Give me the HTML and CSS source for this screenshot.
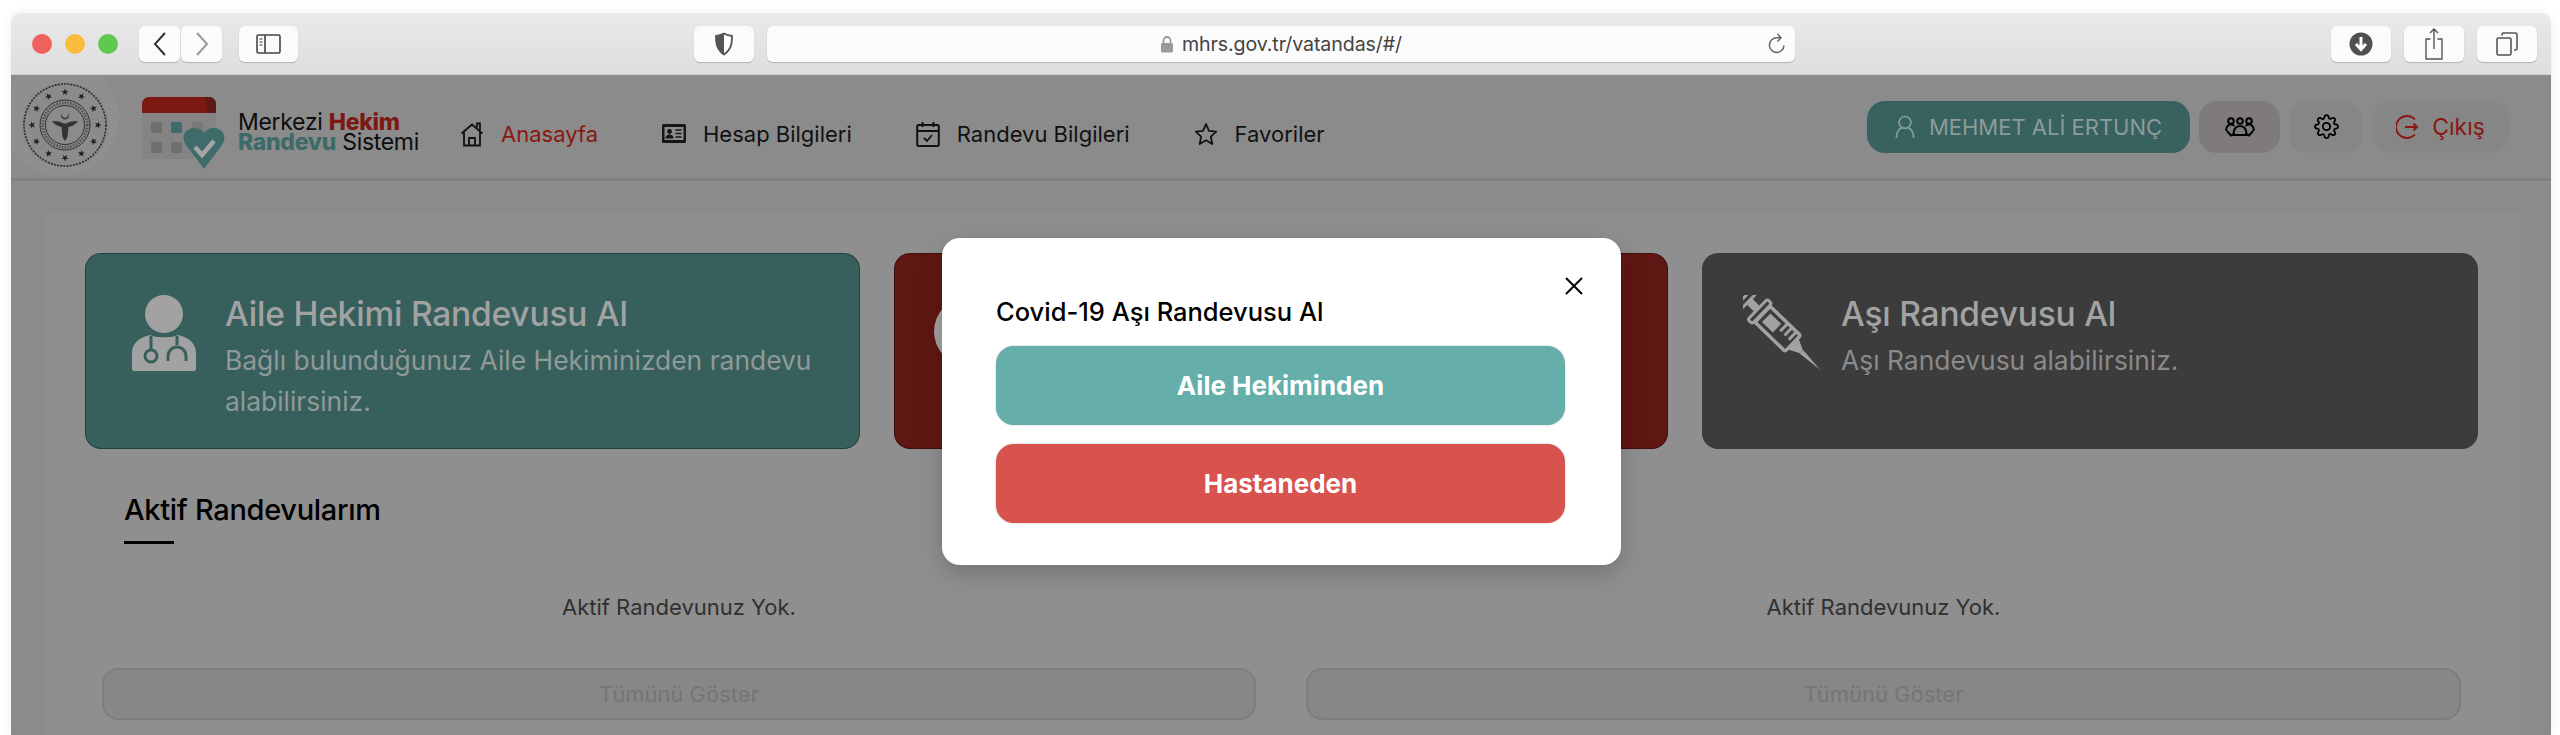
FILE: index.html
```html
<!DOCTYPE html>
<html lang="tr">
<head>
<meta charset="UTF-8">
<title>MHRS</title>
<link rel="stylesheet" href="styles.css">
</head>
<body>
<div class="window">

    <!-- browser toolbar -->
    <div class="toolbar">
        <div class="lights">
            <span class="light red"></span>
            <span class="light yellow"></span>
            <span class="light green"></span>
        </div>
        <div class="nav-pair">
            <div class="tool tool-nav">
                <svg width="14" height="26" viewBox="0 0 14 26"><path d="M12 2 2 13l10 11" fill="none" stroke="#333" stroke-width="2"/></svg>
            </div>
            <div class="tool tool-nav">
                <svg width="14" height="26" viewBox="0 0 14 26"><path d="M2 2l10 11L2 24" fill="none" stroke="#9a9a9a" stroke-width="2"/></svg>
            </div>
        </div>
        <div class="tool tool-side">
            <svg width="25" height="20" viewBox="0 0 25 20"><rect x="1" y="1" width="23" height="18" rx="1.5" fill="none" stroke="#444" stroke-width="1.6"/><path d="M9 1v18" stroke="#444" stroke-width="1.6"/><path d="M3.5 5h3M3.5 8h3M3.5 11h3" stroke="#777" stroke-width="1.4"/></svg>
        </div>
        <div class="tool tool-shield">
            <svg width="20" height="24" viewBox="0 0 20 24"><path d="M10 1.5c3 1.6 5.500 2.200 8 2.500 0 8-1 14-8 18.500C3 18 2 12 2 4c2.500-.3 5-.9 8-2.500z" fill="#fff" stroke="#555" stroke-width="1.8"/><path d="M10 1.500C7 3.100 4.500 3.700 2 4c0 8 1 14 8 18.500z" fill="#555"/></svg>
        </div>
        <div class="urlbar">
            <svg width="14" height="17" viewBox="0 0 14 17"><path d="M3.500 7V4.500a3.500 3.500 0 0 1 7 0V7" fill="none" stroke="#999" stroke-width="1.800"/><rect x="1" y="7" width="12" height="9.500" rx="1.500" fill="#999"/></svg>
            <span class="url-text">mhrs.gov.tr/vatandas/#/</span>
            <svg class="reload" width="20" height="22" viewBox="0 0 20 22"><path d="M17 12.500A7.300 7.300 0 1 1 10 4.800h3" fill="none" stroke="#666" stroke-width="1.500"/><path d="M10.500 1l3.500 3.800-3.500 3.800" fill="none" stroke="#666" stroke-width="1.500"/></svg>
        </div>
        <div class="tool tool-right tool-download">
            <svg width="24" height="24" viewBox="0 0 24 24"><circle cx="12" cy="12" r="11.500" fill="#505050"/><path d="M12 5v12M7 12l5 5.500 5-5.500" fill="none" stroke="#fff" stroke-width="3"/></svg>
        </div>
        <div class="tool tool-right">
            <svg width="20" height="34" viewBox="0 0 20 34"><path d="M6.500 12H2v20h16V12h-4.500" fill="none" stroke="#555" stroke-width="1.400"/><path d="M10 22V2M6 6l4-4 4 4" fill="none" stroke="#555" stroke-width="1.400"/></svg>
        </div>
        <div class="tool tool-right">
            <svg width="22" height="24" viewBox="0 0 22 24"><rect x="1" y="6" width="14" height="17" rx="1.500" fill="none" stroke="#555" stroke-width="1.600"/><path d="M6 3.500V2.500A1.500 1.500 0 0 1 7.500 1H19.500A1.500 1.500 0 0 1 21 2.500V16.500A1.500 1.500 0 0 1 19.500 18H18" fill="none" stroke="#555" stroke-width="1.600"/></svg>
        </div>
    </div>

    <div class="page">

        <!-- site header -->
        <header class="site-header">
            <div class="seal">
                <svg width="88" height="86" viewBox="0 0 88 86">
                    <defs>
                        <path id="st" d="M0-3.600 1 -1.100 3.500-1.100 1.500.5 2.200 3 0 1.500-2.200 3-1.500.5-3.500-1.100-1-1.100z" fill="#222"/>
                    </defs>
                    <circle cx="44" cy="43" r="41" fill="none" stroke="#2b2b2b" stroke-width="1.600" stroke-dasharray="2 1.200"/>
                    <circle cx="44" cy="43" r="25" fill="none" stroke="#333" stroke-width="1"/>
                    <circle cx="44" cy="43" r="19.500" fill="none" stroke="#333" stroke-width="1"/>
                    <circle cx="44" cy="43" r="22.200" fill="none" stroke="#444" stroke-width="3" stroke-dasharray="1.500 1.300" opacity=".8"/>
                    <g transform="translate(44 43)">
                        <use href="#st" y="-33"/>
                        <use href="#st" transform="rotate(30) translate(0 -33)"/>
                        <use href="#st" transform="rotate(60) translate(0 -33)"/>
                        <use href="#st" transform="rotate(90) translate(0 -33)"/>
                        <use href="#st" transform="rotate(120) translate(0 -33)"/>
                        <use href="#st" transform="rotate(150) translate(0 -33)"/>
                        <use href="#st" transform="rotate(180) translate(0 -33)"/>
                        <use href="#st" transform="rotate(210) translate(0 -33)"/>
                        <use href="#st" transform="rotate(240) translate(0 -33)"/>
                        <use href="#st" transform="rotate(270) translate(0 -33)"/>
                        <use href="#st" transform="rotate(300) translate(0 -33)"/>
                        <use href="#st" transform="rotate(330) translate(0 -33)"/>
                    </g>
                    <path d="M31 39c5 0 9 .8 12 2.500h2c3-1.700 7-2.500 12-2.500-2 3-5 5-9.500 6L46.500 55 44 59l-2.500-4-1-10C36 44 33 42 31 39z" fill="#333"/>
                    <path d="M42 30a4 4 0 1 0 4 0 3.200 3.200 0 1 1-4 0z" fill="#333"/>
                </svg>
            </div>
            <div class="brand">
                <svg width="90" height="74" viewBox="0 0 90 74">
                    <rect x="2" y="2" width="74" height="62" rx="7" fill="#848484"/>
                    <path d="M2 18V9a7 7 0 0 1 7-7h60a7 7 0 0 1 7 7v9z" fill="#7d1812"/>
                    <path d="M64 2h5a7 7 0 0 1 7 7v9h-7z" fill="#5d1a16"/>
                    <rect x="11" y="27" width="11" height="11" rx="1" fill="#6f6f6f"/>
                    <rect x="31" y="27" width="11" height="11" rx="1" fill="#3f6c6a"/>
                    <rect x="52" y="27" width="11" height="11" rx="1" fill="#797979"/>
                    <rect x="11" y="47" width="11" height="11" rx="1" fill="#6f6f6f"/>
                    <rect x="31" y="47" width="11" height="11" rx="1" fill="#6f6f6f"/>
                    <path d="M64 74 46 50c-6-9 0-17 8-17 5 0 8 2 10 5 2-3 5-5 10-5 8 0 14 8 8 17z" fill="#3f6c6a"/>
                    <path d="M55 52l7 8 12-14" fill="none" stroke="#a4a4a4" stroke-width="4.500"/>
                </svg>
                <div class="brand-text">
                    <div>Merkezi <b class="c-red">Hekim</b></div>
                    <div><b class="c-teal">Randevu</b> Sistemi</div>
                </div>
            </div>
            <nav class="menu">
                <a class="menu-item active">
                    <svg width="24" height="26" viewBox="0 0 24 26"><path d="M1.500 12.500 12 3.500l10.500 9M4 11v13.500h16V11M17 6.500V2.500h3v6.500" fill="none" stroke="#111" stroke-width="1.800"/><path d="M9 24.500V17h6v7.500M9 17h6" fill="none" stroke="#111" stroke-width="1.800"/></svg>
                    Anasayfa
                </a>
                <a class="menu-item">
                    <svg width="24" height="19" viewBox="0 0 24 19"><rect width="24" height="19" rx="1.500" fill="#161616"/><rect x="2.500" y="3" width="19" height="13" fill="#8b8b8b"/><circle cx="7.500" cy="7.500" r="2.400" fill="#161616"/><path d="M3.500 14.500c0-3 1.800-4 4-4s4 1 4 4z" fill="#161616"/><path d="M13.500 6h6M13.500 9.500h6M13.500 13h6" stroke="#161616" stroke-width="1.700"/></svg>
                    Hesap Bilgileri
                </a>
                <a class="menu-item">
                    <svg width="24" height="26" viewBox="0 0 24 26"><rect x="1.200" y="4" width="21.600" height="21" rx="1.500" fill="none" stroke="#111" stroke-width="2"/><path d="M1 10h22" stroke="#111" stroke-width="2"/><path d="M6.500 1v5M17.500 1v5" stroke="#111" stroke-width="2"/><path d="M8 17l3 3 5-6" fill="none" stroke="#111" stroke-width="1.800"/></svg>
                    Randevu Bilgileri
                </a>
                <a class="menu-item">
                    <svg width="24" height="24" viewBox="0 0 24 24"><path d="M12 2l3 6.800 7.200.8-5.400 5 1.500 7.400L12 18.300 5.700 22l1.500-7.400-5.400-5 7.200-.8z" fill="none" stroke="#111" stroke-width="1.800" stroke-linejoin="round"/></svg>
                    Favoriler
                </a>
            </nav>
            <div class="user-actions">
                <button class="act act-user">
                    <svg width="20" height="26" viewBox="0 0 22 26"><circle cx="11" cy="8" r="6.500" fill="none" stroke="#8c9c99" stroke-width="1.800"/><path d="M1.500 25c0-7 3.500-10.500 6-11M20.500 25c0-7-3.500-10.500-6-11" fill="none" stroke="#8c9c99" stroke-width="1.800"/></svg>
                    MEHMET ALİ ERTUNÇ
                </button>
                <button class="act act-group">
                    <svg width="30" height="20" viewBox="0 0 30 20"><g fill="none" stroke="#000" stroke-width="2"><circle cx="6" cy="4" r="2.800"/><circle cx="15" cy="4" r="2.800"/><circle cx="24" cy="4" r="2.800"/><path d="M1.200 14c0-4 1.300-6.500 4.800-6.500 1.600 0 2.600.5 3.300 1.500M28.800 14c0-4-1.300-6.500-4.800-6.500-1.600 0-2.600.5-3.300 1.500"/><path d="M8.500 18c0-6 2-9 6.500-9s6.500 3 6.500 9z"/><path d="M2 14l4 4.500 4-2M28 14l-4 4.500-4-2"/></g></svg>
                </button>
                <button class="act act-gear">
                    <svg width="25" height="25" viewBox="0 0 24 24"><circle cx="12" cy="12" r="3.500" fill="none" stroke="#000" stroke-width="1.800"/><path d="M19.400 15a1.650 1.650 0 0 0 .33 1.820l.06.06a2 2 0 0 1 0 2.830 2 2 0 0 1-2.830 0l-.06-.06a1.650 1.650 0 0 0-1.820-.33 1.650 1.650 0 0 0-1 1.510V21a2 2 0 0 1-2 2 2 2 0 0 1-2-2v-.09A1.650 1.650 0 0 0 9 19.400a1.650 1.650 0 0 0-1.820.33l-.06.06a2 2 0 0 1-2.830 0 2 2 0 0 1 0-2.830l.06-.06a1.650 1.650 0 0 0 .33-1.820 1.650 1.650 0 0 0-1.510-1H3a2 2 0 0 1-2-2 2 2 0 0 1 2-2h.09A1.650 1.650 0 0 0 4.600 9a1.650 1.650 0 0 0-.33-1.820l-.06-.06a2 2 0 0 1 0-2.830 2 2 0 0 1 2.830 0l.06.06a1.650 1.650 0 0 0 1.820.33H9a1.650 1.650 0 0 0 1-1.510V3a2 2 0 0 1 2-2 2 2 0 0 1 2 2v.09a1.650 1.650 0 0 0 1 1.510 1.650 1.650 0 0 0 1.820-.33l.06-.06a2 2 0 0 1 2.830 0 2 2 0 0 1 0 2.830l-.06.06a1.650 1.650 0 0 0-.33 1.820V9a1.650 1.650 0 0 0 1.510 1H21a2 2 0 0 1 2 2 2 2 0 0 1-2 2h-.09a1.650 1.650 0 0 0-1.510 1z" fill="none" stroke="#000" stroke-width="1.700"/></svg>
                </button>
                <button class="act act-exit">
                    <svg width="22" height="26" viewBox="0 0 22 26"><path d="M19 5.500A11 11 0 1 0 19 20.500" fill="none" stroke="#8a1712" stroke-width="1.800"/><path d="M9 13h12M17.500 9.500 21 13l-3.500 3.500" fill="none" stroke="#8a1712" stroke-width="1.800"/></svg>
                    Çıkış
                </button>
            </div>
        </header>

        <!-- main panel -->
        <main class="panel">
            <div class="cards">
                <div class="card card-teal">
                    <svg class="card-icon" width="64" height="76" viewBox="0 0 64 76">
                        <ellipse cx="32" cy="19" rx="19" ry="19" fill="#a2a2a2"/>
                        <path d="M2 76a2 2 0 0 1-2-2V58c0-10 8-16 18-18 4 3 24 3 28 0 10 2 18 8 18 18v16a2 2 0 0 1-2 2z" fill="#a2a2a2"/>
                        <path d="M19 41v14M45 41v9" fill="none" stroke="#37605d" stroke-width="3"/>
                        <circle cx="19" cy="61" r="6" fill="none" stroke="#37605d" stroke-width="3"/>
                        <path d="M36 66v-5a9 9 0 0 1 18 0v5" fill="none" stroke="#37605d" stroke-width="3"/>
                    </svg>
                    <div>
                        <h2>Aile Hekimi Randevusu Al</h2>
                        <p>Bağlı bulunduğunuz Aile Hekiminizden randevu alabilirsiniz.</p>
                    </div>
                </div>
                <div class="card card-red">
                    <div class="red-icon"></div>
                </div>
                <div class="card card-dark">
                    <svg class="card-icon syringe" width="78" height="76" viewBox="0 0 78 76">
                        <g transform="rotate(44 39 38)" fill="#a2a2a2">
                            <rect x="-13" y="25" width="6" height="26" rx="3" fill="none" stroke="#a2a2a2" stroke-width="3"/>
                            <rect x="-6" y="34" width="12" height="8"/>
                            <rect x="5" y="24" width="6" height="28" rx="2" fill="none" stroke="#a2a2a2" stroke-width="3"/>
                            <rect x="12" y="27" width="42" height="22" rx="2" fill="none" stroke="#a2a2a2" stroke-width="3.500"/>
                            <rect x="17" y="32" width="15" height="12"/>
                            <rect x="35" y="27" width="3" height="11"/>
                            <rect x="41" y="27" width="3" height="11"/>
                            <rect x="47" y="27" width="3" height="11"/>
                            <path d="M54 30l12 6v4l-12 6z"/>
                            <path d="M66 35.500 92 38 66 40.500z"/>
                        </g>
                    </svg>
                    <div>
                        <h2>Aşı Randevusu Al</h2>
                        <p>Aşı Randevusu alabilirsiniz.</p>
                    </div>
                </div>
            </div>

            <h3 class="section-title">Aktif Randevularım</h3>

            <div class="lists">
                <div class="list-col">
                    <p class="empty">Aktif Randevunuz Yok.</p>
                    <button class="show-all">Tümünü Göster</button>
                </div>
                <div class="list-col">
                    <p class="empty">Aktif Randevunuz Yok.</p>
                    <button class="show-all">Tümünü Göster</button>
                </div>
            </div>
        </main>
    </div>

    <!-- covid modal -->
    <div class="modal">
        <svg class="modal-close" width="18" height="18" viewBox="0 0 18 18"><path d="M1 1l16 16M17 1 1 17" fill="none" stroke="#000" stroke-width="2"/></svg>
        <h4>Covid-19 Aşı Randevusu Al</h4>
        <button class="modal-btn btn-teal">Aile Hekiminden</button>
        <button class="modal-btn btn-red">Hastaneden</button>
    </div>
</div>
</body>
</html>
```

FILE: styles.css
```css
/* Base */
html, body {
    height: 100%;
    margin: 0;
    overflow: hidden;
    background: #fff;
}

body {
    font-family: Inter, "Liberation Sans", sans-serif;
}

.window {
    position: relative;
    margin: 13px 9px 0 11px;
    height: 722px;
    border-radius: 10px 10px 0 0;
    overflow: hidden;
    box-shadow: 0 0 10px rgba(0,0,0,0.08);
}

/* Browser toolbar */
.toolbar {
    position: relative;
    z-index: 1;
    height: 62px;
    box-sizing: border-box;
    padding: 13px 13px 0 20px;
    display: flex;
    align-items: flex-start;
    background: linear-gradient(#e9e9e9, #dedede);
    border-bottom: 1px solid #cfcfcf;
}

.lights { display: flex; gap: 13px; margin-top: 8px; margin-right: 21px; margin-left: 1px; }
.light { width: 20px; height: 20px; border-radius: 50%; }
.light.red { background: #f0625d; }
.light.yellow { background: #f8bd3f; }
.light.green { background: #5ec84f; }

.nav-pair { display: flex; gap: 1px; margin-right: 17px; }

.tool {
    height: 36px;
    border-radius: 6px;
    background: #fbfbfb;
    box-shadow: 0 1px 1px rgba(0,0,0,0.2);
    display: flex;
    align-items: center;
    justify-content: center;
}

.tool-nav { width: 41px; }
.tool-side { width: 59px; margin-right: 396px; }
.tool-shield { width: 60px; margin-right: 13px; }
.tool-right { width: 60px; margin-left: 13px; }
.tool-download { margin-left: 536px; }

.urlbar {
    position: relative;
    width: 1028px;
    height: 36px;
    border-radius: 6px;
    background: #fbfbfb;
    box-shadow: 0 1px 1px rgba(0,0,0,0.2);
    display: flex;
    align-items: center;
    justify-content: center;
    gap: 8px;
    font-size: 19.600px;
    color: #444;
}

.url-text { letter-spacing: -0.1px; }
.reload { position: absolute; right: 8px; top: 7px; }

/* Page */
.page {
    height: 660px;
    background: #8b8b8b;
}

.site-header {
    height: 106px;
    display: flex;
    align-items: center;
    box-sizing: border-box;
    border-bottom: 3px solid #7f7f7f;
    padding-right: 42px;
}

.seal {
    width: 88px;
    height: 86px;
    margin-left: 10px;
    margin-top: -3px;
    border-radius: 50%;
    box-shadow: -5px -7px 0 15px #8f8f8f;
    flex-shrink: 0;
}

.brand {
    display: flex;
    align-items: center;
    margin-left: 31px;
    margin-top: 10px;
}

.brand-text {
    margin-left: 8px;
    margin-top: 1px;
    font-size: 23px;
    line-height: 20px;
    color: #0d0d0d;
    letter-spacing: -0.3px;
}

.c-red { color: #7d1812; font-weight: 800; }
.c-teal { color: #3d6a68; font-weight: 800; }

.menu {
    display: flex;
    gap: 64px;
    margin-left: 41px;
    margin-top: 14px;
}

.menu-item {
    display: flex;
    align-items: center;
    gap: 17px;
    font-size: 22px;
    color: #111;
}

.menu-item.active { color: #8a1712; }

.user-actions {
    margin-left: auto;
    display: flex;
    gap: 9px;
}

.act {
    height: 52px;
    border: none;
    border-radius: 18px;
    display: flex;
    align-items: center;
    justify-content: center;
    gap: 14px;
    font-family: inherit;
    font-size: 22px;
    background: #868686;
    padding: 0;
}

.act-user { width: 323px; background: #38625f; color: #8c9c99; }
.act-group { width: 81px; background: #7f7b7b; }
.act-gear { width: 74px; }
.act-exit { width: 137px; color: #8a1712; font-size: 23px; }

/* Main panel */
.panel {
    margin: 32px 32px 0 33px;
    height: 530px;
    padding: 40px 58px 0;
    background: #8f8f8f;
}

.cards {
    display: grid;
    grid-template-columns: 775px 774px 776px;
    gap: 34px;
    margin: 0 -17px;
}

.card {
    height: 196px;
    box-sizing: border-box;
    border-radius: 16px;
    border: 1px solid rgba(0,0,0,0.35);
    padding: 38px 30px 0 46px;
    display: flex;
    gap: 29px;
}

.card h2 {
    margin: 0;
    font-size: 33.500px;
    font-weight: 500;
    line-height: 44px;
    color: #a2a2a2;
    letter-spacing: -0.2px;
}

.card p {
    margin: 4px 0 0;
    font-size: 26.400px;
    line-height: 41px;
    color: #8f9a98;
}

.card-icon { flex-shrink: 0; margin-top: 3px; }
.card-teal { background: #37605d; }
.card-red { background: #5f1713; padding-left: 39px; }
.card-dark { background: #3c3c3c; padding-left: 40px; border-color: transparent; }
.card-dark p { color: #8a8a8a; }
.syringe { margin-right: -9px; }

.red-icon {
    width: 69px;
    height: 69px;
    margin-top: 5px;
    border-radius: 50%;
    background: #a2a2a2;
}

.section-title {
    margin: 43px 0 0 22px;
    font-size: 29px;
    font-weight: 500;
    line-height: 36px;
    color: #000;
    letter-spacing: -0.3px;
    position: relative;
    padding-bottom: 16px;
}

.section-title::after {
    content: "";
    position: absolute;
    left: 0;
    bottom: 0;
    width: 50px;
    height: 3px;
    background: #000;
}

.lists {
    display: grid;
    grid-template-columns: 1154px 1155px;
    gap: 50px;
}

.list-col { display: flex; flex-direction: column; }

.empty {
    margin: 49px 0 0;
    font-size: 22px;
    line-height: 28px;
    text-align: center;
    color: #303030;
}

.show-all {
    margin-top: 47px;
    height: 52px;
    border: 2px solid #7e7e7e;
    border-radius: 16px;
    background: #878787;
    font-family: inherit;
    font-size: 22px;
    color: #757575;
}

/* Modal */
.modal {
    position: absolute;
    left: 931px;
    top: 225px;
    width: 679px;
    height: 327px;
    box-sizing: border-box;
    padding: 58px 54px 0;
    background: #fff;
    border-radius: 18px;
    box-shadow: 0 8px 24px rgba(0,0,0,0.2);
}

.modal h4 {
    margin: 0 0 18px;
    font-size: 25.500px;
    font-weight: 500;
    line-height: 32px;
    color: #000;
}

.modal-close { position: absolute; right: 38px; top: 39px; }

.modal-btn {
    display: block;
    width: 569px;
    height: 79px;
    border: none;
    border-radius: 18px;
    box-shadow: 0 0 2px rgba(0,0,0,0.3);
    font-family: inherit;
    font-size: 26px;
    font-weight: 700;
    color: #fff;
}

.btn-teal { background: #65aeaa; margin-bottom: 19px; }
.btn-red { background: #d8524e; }
```
